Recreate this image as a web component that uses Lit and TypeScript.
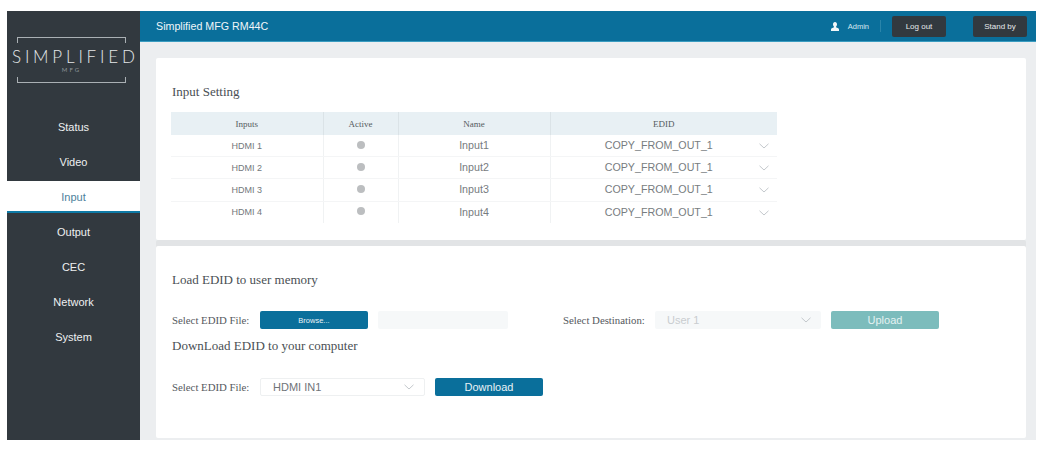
import { LitElement, html, css, svg } from "lit";
import { customElement } from "lit/decorators.js";

const chevron = svg`<svg class="chev" width="10" height="6" viewBox="0 0 10 6"><path d="M.5.8 5 5 9.5.8" fill="none" stroke="#c4c8cc" stroke-width="1"/></svg>`;

@customElement("app-root")
export class AppRoot extends LitElement {
  static styles = css`
    :host { display: block; width: 1055px; height: 452px; box-sizing: border-box; padding: 11px 19px 12px 7px; background: #fff; font-family: "Liberation Sans", Arial, sans-serif; overflow: hidden; }
    .frame { display: flex; height: 429px; }
    .side { width: 133px; flex: none; background: #32393f; display: flex; flex-direction: column; }
    .logo-wrap { height: 98.500px; box-sizing: border-box; padding: 26px 0 0 10px; }
    .logo { position: relative; width: 109px; height: 46px; box-sizing: border-box; }
    .brk { position: absolute; left: 0; right: 0; height: 5px; border: 1px solid #aab0b4; }
    .brk.t { top: 0; border-bottom: 0; }
    .brk.b { bottom: 0; border-top: 0; }
    .lname { position: absolute; left: -5px; top: 10px; width: 122px; text-align: left; white-space: nowrap; font-family: Lato, sans-serif; font-weight: 300; font-size: 17px; line-height: 20px; letter-spacing: 3.800px; color: #e4e7e9; background: #32393f; }
    .lsub { position: absolute; left: 0; right: 0; top: 29px; text-align: center; font-family: Lato, sans-serif; font-size: 6px; line-height: 8px; letter-spacing: 2px; color: #8f969b; }
    .nav { display: flex; flex-direction: column; }
    .nav div { height: 35.100px; line-height: 35.100px; text-align: center; font-size: 11px; color: #eef0f1; box-sizing: border-box; }
    .nav div.on { background: #fff; color: #4d7f9c; height: 32px; line-height: 33px; margin: 1.550px 0; border-bottom: 2px solid #0e7aa6; }
    .main { flex: 1; min-width: 0; display: flex; flex-direction: column; background: #eceef0; }
    .top { height: 31px; flex: none; background: #0a6f9b; border-bottom: 1px solid #3a9cc0; box-sizing: border-box; display: flex; align-items: center; padding: 0 9px 0 16px; color: #f0f6f9; }
    .brand { font-size: 10.700px; flex: 1; }
    .user { display: flex; align-items: center; gap: 9px; font-size: 7.500px; color: #d5e8f1; padding-right: 11px; border-right: 1px solid #2a85aa; height: 12px; }
    .tbtn { background: #32393f; color: #e6e9eb; font-size: 8px; height: 21px; display: flex; align-items: center; justify-content: center; border-radius: 2px; }
    .tbtn.lo { width: 54px; margin-left: 11px; }
    .tbtn.sb { width: 54px; margin-left: 27px; }
    .body { flex: 1; display: flex; flex-direction: column; padding: 16px 10px 2px 16px; }
    .card { background: #fff; border-radius: 2px; box-sizing: border-box; padding: 0 15px; }
    .c1 { height: 182px; padding-top: 26px; }
    .c2 { height: 192px; margin-top: 6px; padding-top: 26px; box-shadow: 0 -6px 0 #e2e4e6; }
    h2 { margin: 0; font: 400 13px/15px "Liberation Serif", serif; color: #4a4f54; padding-left: 1px; }
    table { border-collapse: collapse; table-layout: fixed; width: 606px; margin-top: 13px; }
    th { background: #e8f0f4; height: 23px; padding: 0; font: 400 9px "Liberation Serif", serif; color: #555b60; border-left: 1px solid #dbe3e7; }
    th:first-child, td:first-child { border-left: 0; }
    td { height: 21.200px; padding: 0; text-align: center; font-size: 9px; color: #73787c; border-left: 1px solid #f0f2f3; border-bottom: 1px solid #f4f5f6; }
    tr:last-child td { border-bottom: 0; }
    td.n, td.e { height: 20.200px; font-size: 10.700px; color: #777c80; padding-bottom: 1px; }
    .dot { display: inline-block; width: 8px; height: 8px; border-radius: 50%; background: #bcbec0; vertical-align: middle; margin-bottom: 2px; }
    .ec { position: relative; display: block; padding-right: 10px; }
    .ec .chev { position: absolute; right: 8px; top: 4px; }
    .row { display: flex; align-items: center; height: 18px; }
    .lbl { font: 400 10.800px/18px "Liberation Serif", serif; color: #55595e; padding-left: 1px; white-space: nowrap; }
    .l1 { width: 88px; flex: none; }
    .btn { width: 108px; height: 18px; flex: none; border-radius: 2px; background: #0a6f9b; color: #e8f2f6; display: flex; align-items: center; justify-content: center; font-size: 11px; box-sizing: border-box; }
    .btn.small { font-size: 7.500px; }
    .btn.off { background: #7cbcbc; color: #e4f2f2; margin-left: 10px; }
    .btn.dl { margin-left: 10px; }
    .file { width: 130px; height: 18px; margin-left: 10px; background: #f6f8f9; border-radius: 2px; flex: none; }
    .sel { height: 18px; flex: none; box-sizing: border-box; border-radius: 2px; display: flex; align-items: center; justify-content: space-between; font-size: 11px; padding: 0 10px 0 12px; }
    .sel.d { width: 165px; border: 1px solid #eef0f1; color: #6f7478; }
    .sel.u { width: 166px; background: #f6f8f9; color: #c9cdd0; margin-left: 10px; }
    .dest { margin-left: 54px; width: 82px; }
    .r1 { margin-top: 24px; }
    .h2b { margin-top: 9px; }
    .r2 { margin-top: 25px; }
  `;

  render() {
    const nav = ["Status", "Video", "Input", "Output", "CEC", "Network", "System"];
    const rows = [1, 2, 3, 4];
    return html`
      <div class="frame">
        <aside class="side">
          <div class="logo-wrap">
            <div class="logo">
              <div class="brk t"></div>
              <div class="brk b"></div>
              <div class="lname">SIMPLIFIED</div>
              <div class="lsub">MFG</div>
            </div>
          </div>
          <nav class="nav">${nav.map((n) => html`<div class=${n === "Input" ? "on" : ""}>${n}</div>`)}</nav>
        </aside>
        <div class="main">
          <header class="top">
            <div class="brand">Simplified MFG RM44C</div>
            <div class="user">
              <svg width="8" height="9" viewBox="0 0 8 9"><path d="M4 0C2.7 0 2 1 2 2.3 2 3.4 2.500 4.300 3 4.700V5.300L.8 6.300C.2 6.600 0 7 0 7.500V9H8V7.500C8 7 7.800 6.600 7.200 6.300L5 5.300V4.700C5.500 4.300 6 3.400 6 2.300 6 1 5.300 0 4 0Z" fill="#f2f6f8"/></svg>
              <span>Admin</span>
            </div>
            <div class="tbtn lo">Log out</div>
            <div class="tbtn sb">Stand by</div>
          </header>
          <div class="body">
            <section class="card c1">
              <h2>Input Setting</h2>
              <table>
                <colgroup><col style="width:152px" /><col style="width:75px" /><col style="width:152px" /><col style="width:227px" /></colgroup>
                <thead><tr><th>Inputs</th><th>Active</th><th>Name</th><th>EDID</th></tr></thead>
                <tbody>
                  ${rows.map((i) => html`<tr>
                    <td>HDMI ${i}</td>
                    <td><span class="dot"></span></td>
                    <td class="n">Input${i}</td>
                    <td class="e"><span class="ec">COPY_FROM_OUT_1${chevron}</span></td>
                  </tr>`)}
                </tbody>
              </table>
            </section>
            <section class="card c2">
              <h2>Load EDID to user memory</h2>
              <div class="row r1">
                <div class="lbl l1">Select EDID File:</div>
                <div class="btn small">Browse...</div>
                <div class="file"></div>
                <div class="lbl dest">Select Destination:</div>
                <div class="sel u"><span>User 1</span>${chevron}</div>
                <div class="btn off">Upload</div>
              </div>
              <h2 class="h2b">DownLoad EDID to your computer</h2>
              <div class="row r2">
                <div class="lbl l1">Select EDID File:</div>
                <div class="sel d"><span>HDMI IN1</span>${chevron}</div>
                <div class="btn dl">Download</div>
              </div>
            </section>
          </div>
        </div>
      </div>
    `;
  }
}
